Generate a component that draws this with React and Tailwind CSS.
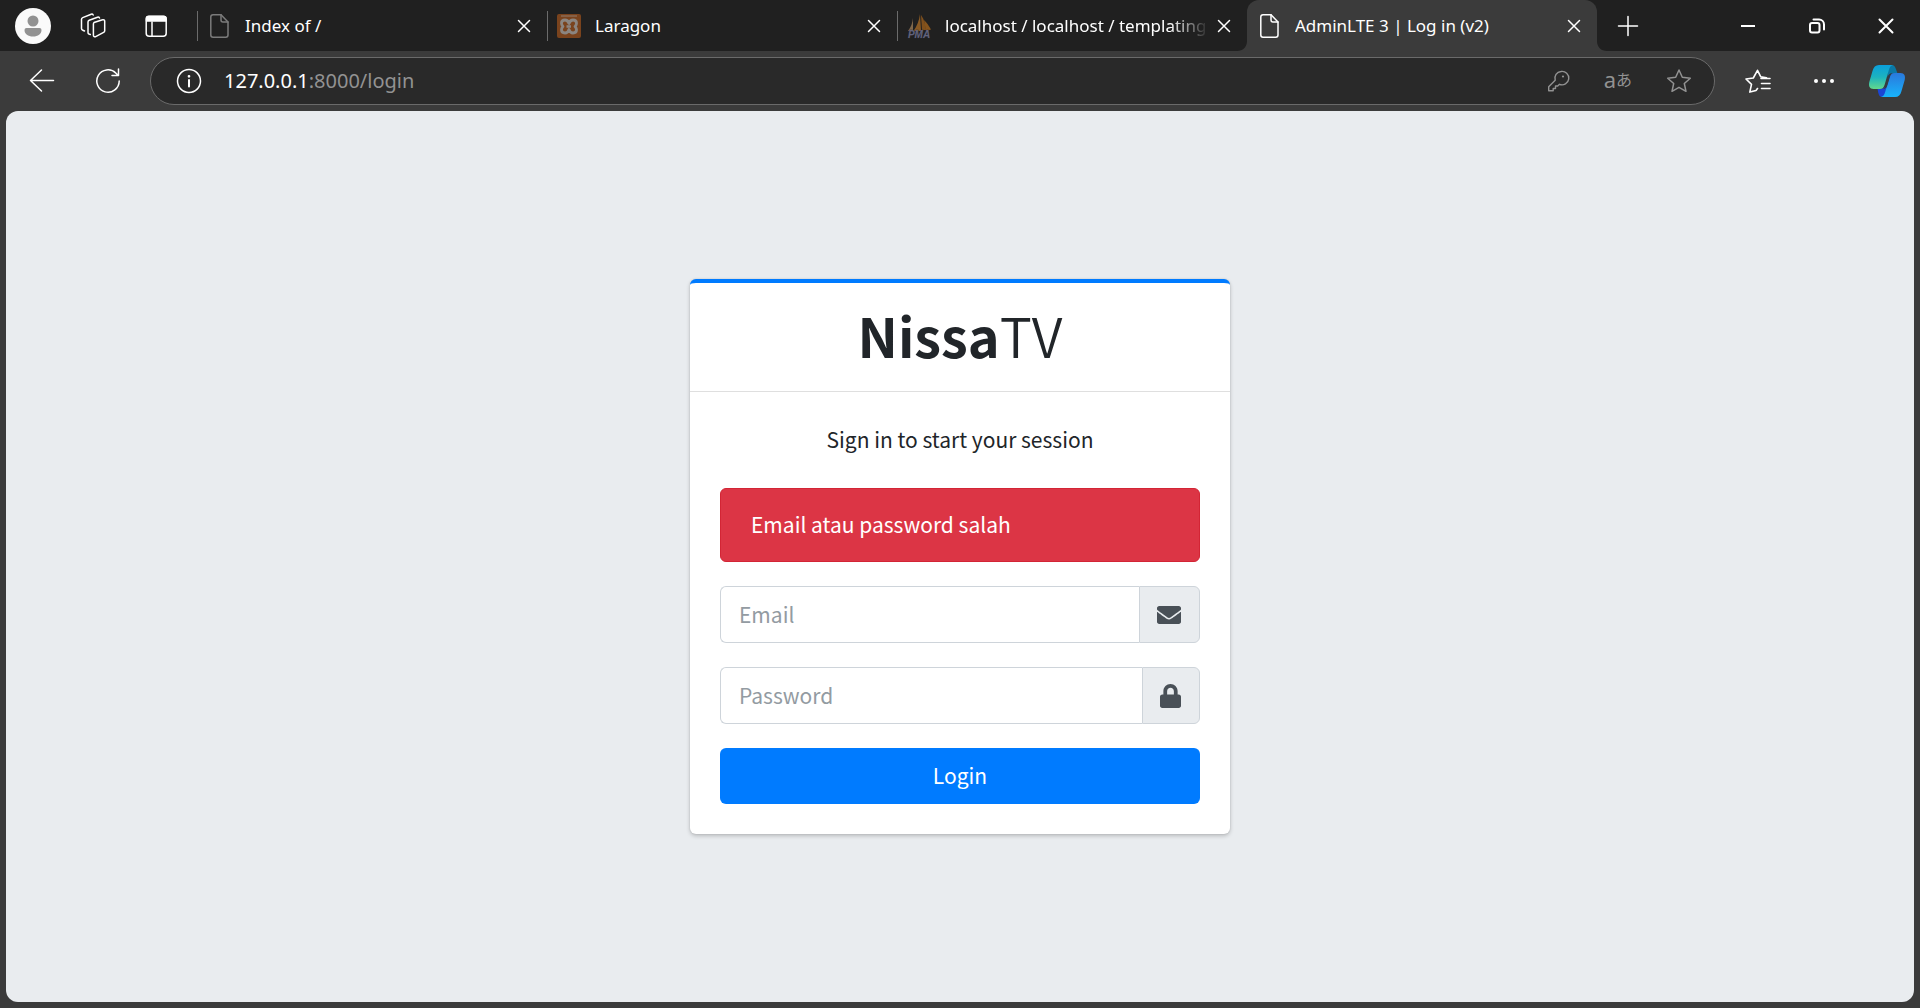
import React from "react";
import { FaEnvelope, FaLock } from "react-icons/fa";

const UI = "font-['Noto_Sans',sans-serif]";
const BODY = "font-['Noto_Sans_CJK_SC',sans-serif]";

function Line({ w = 24, h = 24, sw = 1.5, className = "", children }) {
  return (
    <svg
      width={w}
      height={h}
      viewBox={`0 0 ${w} ${h}`}
      fill="none"
      stroke="currentColor"
      strokeWidth={sw}
      strokeLinecap="round"
      strokeLinejoin="round"
      className={`shrink-0 ${className}`}
      aria-hidden="true"
    >
      {children}
    </svg>
  );
}

const FileIcon = ({ className }) => (
  <Line className={className}>
    <path d="M6 .8h8L21 8v13a2.2 2.2 0 0 1-2.2 2.2H6A2.2 2.2 0 0 1 3.800 21V3A2.200 2.200 0 0 1 6 .8Z" />
    <path d="M14 .8V6a2 2 0 0 0 2 2h5" />
  </Line>
);

const XamppIcon = () => (
  <svg width="24" height="24" viewBox="0 0 24 24" className="shrink-0" aria-hidden="true">
    <rect width="24" height="24" rx="2" fill="#7a431d" />
    <path d="M4 2h16" stroke="#8e7663" strokeWidth="1.200" />
    <path
      d="M12 9.500C11 6.500 9.500 6 8 6 5.500 6 4.500 7.500 4.500 9.200 4.500 11 5.500 11.800 6 12.500 5.500 13.200 4.500 14 4.500 15.800 4.500 17.500 5.500 19 8 19 9.500 19 11 18.500 12 15.500 13 18.500 14.500 19 16 19 18.500 19 19.500 17.500 19.500 15.800 19.500 14 18.500 13.200 18 12.500 18.500 11.800 19.500 11 19.500 9.200 19.500 7.500 18.500 6 16 6 14.500 6 13 6.500 12 9.500Z"
      fill="none"
      stroke="#8b8580"
      strokeWidth="2.800"
      strokeLinejoin="round"
    />
    <path d="M9.500 12.500H14" stroke="#8b8580" strokeWidth="2.600" />
  </svg>
);

const PmaIcon = () => (
  <svg width="24" height="24" viewBox="0 0 24 24" className="shrink-0 overflow-visible" aria-hidden="true">
    <path d="M6 4C5.500 9 4 13 1 17h5Z" fill="#80684b" />
    <path d="M13 0C12 7 10 12 6.500 17H14Z" fill="#8a5a24" />
    <path d="M14 1c3 4 4.500 9 5 15h-4Z" fill="#80501c" />
    <path d="M17 6c3 3 5 6 7 9.500L19 17Z" fill="#86541c" />
    <text
      x="12"
      y="24"
      textAnchor="middle"
      fill="#62637c"
      stroke="#2b2b38"
      strokeWidth=".6"
      paintOrder="stroke"
      className="font-['Liberation_Sans',sans-serif] text-[10px] font-bold italic"
    >
      PMA
    </text>
  </svg>
);

const tabs = [
  { title: "Index of /", icon: <FileIcon className="text-[#7b7b7b]" /> },
  { title: "Laragon", icon: <XamppIcon /> },
  { title: "localhost / localhost / templating", icon: <PmaIcon />, fade: true },
  { title: "AdminLTE 3 | Log in (v2)", icon: <FileIcon className="text-white" />, active: true },
];

function Flare({ className }) {
  return (
    <svg width="10" height="10" viewBox="0 0 10 10" className={`absolute bottom-0 ${className}`} aria-hidden="true">
      <path d="M10 0v10H0C6 10 10 6 10 0Z" fill="#3b3b3b" />
    </svg>
  );
}

function Tab({ tab }) {
  return (
    <div
      className={
        tab.active
          ? "relative flex min-w-0 basis-[350px] items-center rounded-t-[12px] bg-[#3b3b3b] pr-4 pl-[10px]"
          : "relative flex min-w-0 basis-[350px] items-center pr-4 pl-[10px]"
      }
    >
      {tab.active ? (
        <>
          <Flare className="-left-[10px]" />
          <Flare className="-right-[10px] -scale-x-100" />
        </>
      ) : (
        <span className="absolute top-[11px] left-0 h-[30px] w-px bg-[#6b6b6b]" />
      )}
      {tab.icon}
      <span
        className={
          tab.fade
            ? "ml-[14px] min-w-0 flex-1 overflow-hidden text-[17px] leading-6 whitespace-nowrap text-white [mask-image:linear-gradient(to_right,black_85%,transparent)]"
            : "ml-[14px] min-w-0 flex-1 overflow-hidden text-[17px] leading-6 whitespace-nowrap text-white"
        }
      >
        {tab.title}
      </span>
      <button type="button" aria-label={`Close ${tab.title}`} className="ml-2 text-white">
        <Line w={14} h={14}>
          <path d="M1.500 1.500l11 11M12.500 1.500l-11 11" />
        </Line>
      </button>
    </div>
  );
}

function IconButton({ label, className, children }) {
  return (
    <button type="button" aria-label={label} className={`flex shrink-0 items-center justify-center ${className}`}>
      {children}
    </button>
  );
}

function TabStrip() {
  return (
    <div className="flex h-[51px] bg-[#202020] text-white">
      <div className="flex w-[197px] shrink-0 items-center pl-[15px]">
        <IconButton label="Profile" className="size-9">
          <svg width="36" height="36" viewBox="0 0 36 36" aria-hidden="true">
            <circle cx="18" cy="18" r="18" fill="#fafafa" />
            <circle cx="18" cy="13" r="5.500" fill="#929292" />
            <path d="M11.500 20h13a2 2 0 0 1 2 2c0 4-3.500 6.500-8.500 6.500S9.500 26 9.500 22a2 2 0 0 1 2-2Z" fill="#929292" />
          </svg>
        </IconButton>
        <IconButton label="Workspaces" className="ml-[29px] size-[26px]">
          <Line w={26} h={26}>
            <path d="m14 9.500 8.500-2.700a1.600 1.600 0 0 1 2.200 1.500v9.500q0 1.200-1.100 1.600l-7.900 4.200a1.500 1.500 0 0 1-2.300-1.300V11.300q0-1.300.6-1.800Z" />
            <path d="M10.300 21.500 9 21a1.700 1.700 0 0 1-1-1.600V9q0-1.300 1.200-1.800l8.300-3a1.700 1.700 0 0 1 2 .8" />
            <path d="m4.500 18-1.700-.8A1.700 1.700 0 0 1 1.500 15.500V6.300q0-1.200 1.200-1.700l8.500-3.400a1.700 1.700 0 0 1 2 .8" />
          </Line>
        </IconButton>
        <IconButton label="Tab actions" className="ml-[38px] size-6">
          <Line>
            <rect x="2.200" y="2.200" width="20" height="20" rx="3" />
            <path d="M2.500 4q0-1.500 1.500-1.500h16q2 0 2 2V7h-19.500Z" fill="currentColor" />
            <path d="M8 8v14" />
          </Line>
        </IconButton>
      </div>
      {tabs.map((t) => (
        <Tab key={t.title} tab={t} />
      ))}
      <IconButton label="New tab" className="ml-5 w-[22px]">
        <Line w={22} h={22}>
          <path d="M11 1.500v19M1.500 11h19" />
        </Line>
      </IconButton>
      <div className="ml-auto flex">
        <IconButton label="Minimize" className="w-[69px]">
          <Line w={18} h={18} sw={2}>
            <path d="M2 9h14" strokeLinecap="butt" />
          </Line>
        </IconButton>
        <IconButton label="Restore" className="w-[69px]">
          <Line w={18} h={18} sw={2}>
            <rect x="2" y="6" width="9.500" height="9.500" rx="2" />
            <path d="M5.500 2.500h5.500a5 5 0 0 1 5 5v5" />
          </Line>
        </IconButton>
        <IconButton label="Close window" className="w-[69px]">
          <Line w={18} h={18} sw={2}>
            <path d="m2.500 2.500 13 13m0-13-13 13" />
          </Line>
        </IconButton>
      </div>
    </div>
  );
}

const STAR = "m13 2 3.300 7.300 8 .9-6 5.300 1.700 7.800-7-4-7 4 1.700-7.800-6-5.300 8-.9Z";

const CopilotIcon = () => (
  <svg width="38" height="34" viewBox="0 0 38 34" aria-hidden="true">
    <defs>
      <linearGradient id="cpl-left" x1="0" y1="0" x2="0" y2="1">
        <stop offset="0" stopColor="#0a9fdc" />
        <stop offset=".5" stopColor="#1cb3bf" />
        <stop offset="1" stopColor="#62d88c" />
      </linearGradient>
      <linearGradient id="cpl-right" x1="0" y1="0" x2="0" y2="1">
        <stop offset="0" stopColor="#2a78dc" />
        <stop offset="1" stopColor="#18b3fb" />
      </linearGradient>
    </defs>
    <path d="M20 1h3.500c2.800 0 3.800 1.800 4.600 4.500L29.500 9.500H24c-2 0-3.500 1-4.500 3.500Z" fill="#0b78a5" />
    <path d="M18 33h-3.500c-2.800 0-3.500-1.500-4.300-4.500L9.500 24.500H14c2 0 3.500-1.500 4.500-4Z" fill="#1b45d4" />
    <path d="M11 1h14c-2.500.6-3.500 2.500-4.300 5.500l-4 14c-.9 3-2.200 4.500-5 4.500H5.500C1.500 25 .4 22 1.300 18L4.500 7C5.600 3 7.500 1 11 1Z" fill="url(#cpl-left)" />
    <path d="M27 33H13c2.500-.6 3.500-2.500 4.300-5.500l4-14c.9-3 2.700-4.500 5.500-4.500h5.700c4 0 5.100 3 4.200 7l-3.200 11c-1.100 4-3 6-6.500 6Z" fill="url(#cpl-right)" />
    <path d="M24 9.300c-2.400.2-3.700 1.600-4.300 4l-2.600 9c-.4 1.300-1 2.200-2 2.700 2.300-.2 3.500-1.300 4.200-3.500l3-9.700c.4-1.300.9-2 1.700-2.500Z" fill="#333b45" />
  </svg>
);

function Toolbar() {
  return (
    <div className="flex h-[60px] items-center pr-[14px] text-white">
      <IconButton label="Back" className="ml-[29px] size-[26px]">
        <Line w={26} h={26}>
          <path d="M24.500 12.500h-23M12.500 2 1.500 12.500l11 10.500" />
        </Line>
      </IconButton>
      <IconButton label="Refresh" className="ml-10 size-[26px]">
        <Line w={26} h={26}>
          <path d="M24.200 13A11.200 11.200 0 1 1 21 5.200l2 2M23.500 1v6.500H17" />
        </Line>
      </IconButton>
      <div className="ml-[29px] flex h-12 min-w-0 flex-1 items-center rounded-full border border-[#6a6a6a] bg-[#292929] pr-[22px] pl-[25px]">
        <IconButton label="Site information" className="size-[26px]">
          <Line w={26} h={26}>
            <circle cx="13" cy="13" r="11.500" />
            <path d="M13 12v6.500" strokeWidth="2" />
            <circle cx="13" cy="8.300" r=".6" fill="currentColor" />
          </Line>
        </IconButton>
        <p className="ml-[22px] flex-1 text-[20px] leading-7 text-[#929292]">
          <span className="text-white">127.0.0.1</span>:8000/login
        </p>
        <div className="flex items-center gap-[34px] text-[#929292]">
          <IconButton label="Passwords" className="size-6">
            <Line sw={1.4}>
              <path d="M15 2.500a6.700 6.700 0 1 1-1.500 12.800L11.700 17H9.500v2.500H7.200v2.200H2.700v-4l6.500-6.500A6.700 6.700 0 0 1 15 2.500Z" />
              <circle cx="17" cy="7.500" r="1.100" fill="currentColor" stroke="none" />
            </Line>
          </IconButton>
          <button type="button" aria-label="Translate" className="flex items-center pb-1 leading-6">
            <span className="text-[22px] leading-6">a</span>
            <span className="font-['Noto_Sans_CJK_JP',sans-serif] text-[16px] leading-6">あ</span>
          </button>
          <IconButton label="Add to favorites" className="size-[26px]">
            <Line w={26} h={26}>
              <path d={STAR} />
            </Line>
          </IconButton>
        </div>
      </div>
      <IconButton label="Favorites" className="ml-[30px] size-[26px]">
        <Line w={26} h={26} sw={1.6}>
          <path d="m11 22.500-6.200 1.600 1.700-7.800-5.500-5.300 7.300-1L12.500 2.300l3.300 6.500 5.700.9M16 10.500h9M16.500 15.500H25M16.500 20.500H25M12.500 20.500l-1.500 2" />
        </Line>
      </IconButton>
      <IconButton label="Settings and more" className="ml-10 size-[26px]">
        <svg width="26" height="26" viewBox="0 0 26 26" fill="currentColor" aria-hidden="true">
          <circle cx="5" cy="13" r="2" />
          <circle cx="13" cy="13" r="2" />
          <circle cx="21" cy="13" r="2" />
        </svg>
      </IconButton>
      <IconButton label="Copilot" className="ml-[31px]">
        <CopilotIcon />
      </IconButton>
    </div>
  );
}

function Field({ id, type, label, icon }) {
  return (
    <div className="mb-6 flex h-[57px]">
      <label htmlFor={id} className="sr-only">
        {label}
      </label>
      <input
        id={id}
        type={type}
        placeholder={label}
        className="min-w-0 flex-1 rounded-l-[6px] border border-r-0 border-[#ced4da] bg-white px-[18px] text-[21px] text-[#495057] outline-none placeholder:text-[#939ba2]"
      />
      <span className="flex items-center rounded-r-[6px] border border-[#ced4da] bg-[#e9ecef] pr-[18px] pl-[17px] text-[#495057]">
        {icon}
      </span>
    </div>
  );
}

function LoginCard() {
  return (
    <main className="w-[540px] rounded-[6px] border-t-4 border-[#007bff] bg-white text-[#212529] shadow-[0_0_2px_rgba(0,0,0,0.13),0_2px_4px_rgba(0,0,0,0.2)]">
      <header className="flex h-[109px] items-center justify-center border-b border-[#dfdfdf] pb-1">
        <a href="#home" className="text-[54px] leading-[72px] font-[350]">
          <b className="font-bold">Nissa</b>TV
        </a>
      </header>
      <div className="px-[30px] pt-[29px] pb-[30px]">
        <p className="mb-[31px] text-center text-[21px] leading-9">Sign in to start your session</p>
        <div role="alert" className="mb-6 rounded-[6px] border border-[#d32535] bg-[#dc3545] px-[30px] pt-[17px] pb-[19px] text-[21px] leading-9 text-white">
          Email atau password salah
        </div>
        <form onSubmit={(e) => e.preventDefault()}>
          <Field id="email" type="email" label="Email" icon={<FaEnvelope className="size-6" />} />
          <Field id="password" type="password" label="Password" icon={<FaLock className="h-6 w-[21px]" />} />
          <button type="submit" className="block h-14 w-full rounded-[6px] bg-[#007bff] pb-[2px] text-[21px] leading-9 text-white">
            Login
          </button>
        </form>
      </div>
    </main>
  );
}

export default function App() {
  return (
    <div className={`flex min-h-screen flex-col bg-[#3b3b3b] ${UI}`}>
      <TabStrip />
      <Toolbar />
      <div className={`mx-1.5 mb-1.5 flex flex-1 items-center justify-center rounded-[12px] bg-[#e9ecef] ${BODY}`}>
        <LoginCard />
      </div>
    </div>
  );
}
